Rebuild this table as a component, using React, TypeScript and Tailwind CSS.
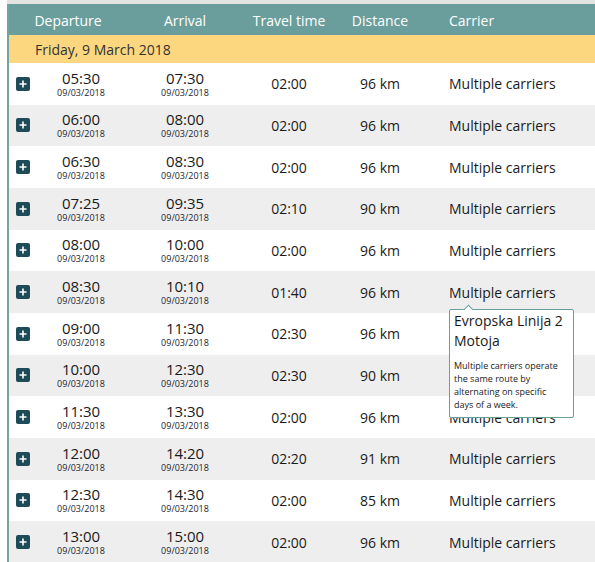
const rows = [
  { dep: "05:30", arr: "07:30", time: "02:00", dist: "96 km" },
  { dep: "06:00", arr: "08:00", time: "02:00", dist: "96 km" },
  { dep: "06:30", arr: "08:30", time: "02:00", dist: "96 km" },
  { dep: "07:25", arr: "09:35", time: "02:10", dist: "90 km" },
  { dep: "08:00", arr: "10:00", time: "02:00", dist: "96 km" },
  { dep: "08:30", arr: "10:10", time: "01:40", dist: "96 km" },
  { dep: "09:00", arr: "11:30", time: "02:30", dist: "96 km" },
  { dep: "10:00", arr: "12:30", time: "02:30", dist: "90 km" },
  { dep: "11:30", arr: "13:30", time: "02:00", dist: "96 km" },
  { dep: "12:00", arr: "14:20", time: "02:20", dist: "91 km" },
  { dep: "12:30", arr: "14:30", time: "02:00", dist: "85 km" },
  { dep: "13:00", arr: "15:00", time: "02:00", dist: "96 km" },
];

function PlusIcon() {
  return (
    <div className="w-[14px] h-[14px] rounded-[2px] bg-[#1f4b59] flex items-center justify-center">
      <svg width="10" height="10" viewBox="0 0 10 10">
        <path d="M5 1.5v7M1.5 5h7" stroke="white" strokeWidth="1.6" />
      </svg>
    </div>
  );
}

function TimeCell({ t, w }: { t: string; w: string }) {
  return (
    <div className={`${w} flex flex-col items-center`}>
      <span className="text-[15px] leading-[17px] text-[#1a1a1a]">{t}</span>
      <span className="text-[9px] leading-[11px] text-[#1c1c2e]">09/03/2018</span>
    </div>
  );
}

export default function App() {
  return (
    <div className="w-[595px] h-[562px] overflow-hidden bg-white font-['Open_Sans',sans-serif]">
      <div className="h-[4px] ml-[7px] bg-[#e3e3e3]" />
      <div className="ml-[7px] border-l-2 border-[#74a4a0] relative">
        {/* header */}
        <div className="h-[31px] pt-[1px] bg-[#6a9e9c] text-white text-[14px] flex items-center">
          <div className="w-[118px] text-center">Departure</div>
          <div className="w-[116px] text-center">Arrival</div>
          <div className="w-[92px] text-center">Travel time</div>
          <div className="w-[90px] text-center">Distance</div>
          <div className="flex-1 pl-[24px]">Carrier</div>
        </div>

        {/* date bar */}
        <div className="h-[28px] bg-[#fcd77f] flex items-center pl-[26px] text-[14px] text-[#333]">
          Friday, 9 March 2018
        </div>

        {rows.map((r, i) => (
          <div
            key={i}
            className={`h-[41.67px] flex items-center ${i % 2 === 1 ? "bg-[#eeeeee]" : "bg-white"}`}
          >
            <div className="w-[26px] flex justify-center pl-[1px]">
              <PlusIcon />
            </div>
            <TimeCell t={r.dep} w="w-[92px]" />
            <TimeCell t={r.arr} w="w-[116px]" />
            <div className="w-[92px] text-center text-[14px] text-[#1a1a1a]">{r.time}</div>
            <div className="w-[90px] text-center text-[14px] text-[#1a1a1a]">{r.dist}</div>
            <div className="flex-1 pl-[24px] text-[14px] text-[#1a1a1a]">Multiple carriers</div>
          </div>
        ))}

        {/* tooltip */}
        <div className="absolute left-[440px] top-[305px] w-[125px] bg-white border border-[#6a9e9c] rounded-[2px] px-[4px] pt-[1px] pb-[6px]">
          <div className="absolute -top-[4px] left-[15px] w-[7px] h-[7px] bg-white border-l border-t border-[#6a9e9c] rotate-45" />
          <div className="text-[14px] leading-[20px] text-[#1a1a1a] whitespace-nowrap">
            Evropska Linija 2<br />Motoja
          </div>
          <div className="mt-[8px] text-[9px] leading-[13px] text-[#1a1a1a] whitespace-nowrap">
            Multiple carriers operate<br />the same route by<br />alternating on specific<br />days of a week.
          </div>
        </div>
      </div>
    </div>
  );
}
